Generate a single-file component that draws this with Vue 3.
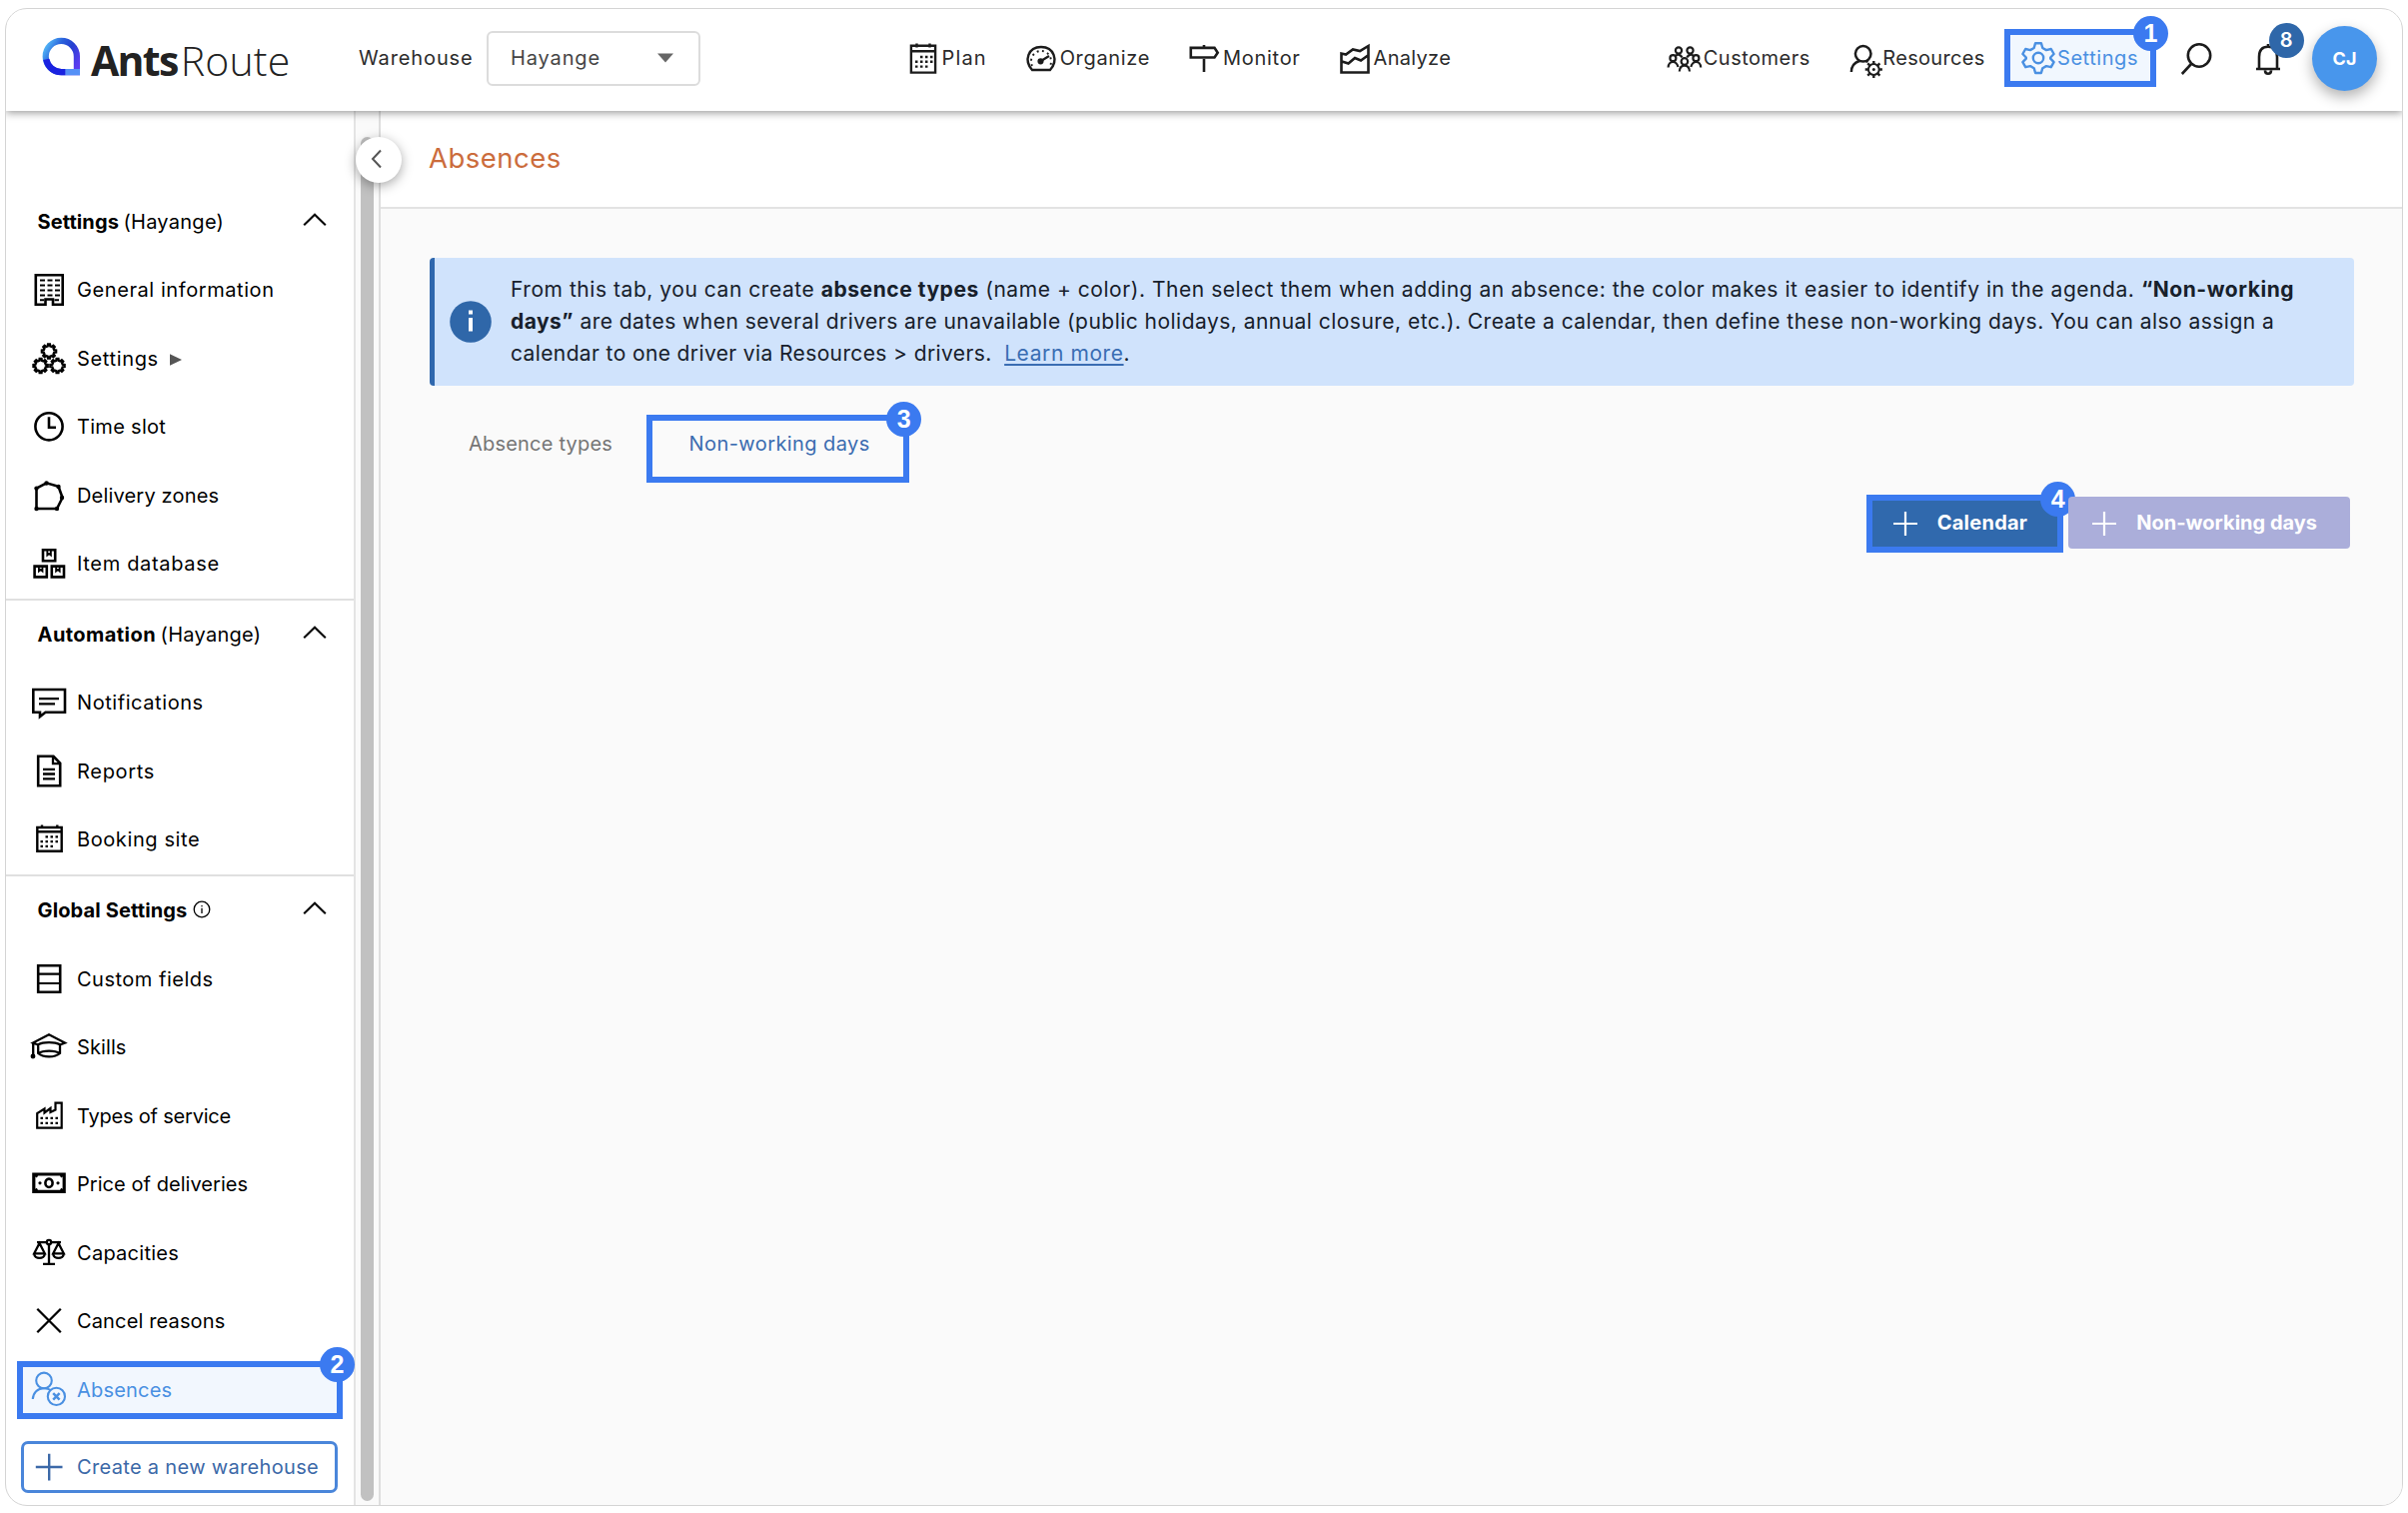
<template>
  <div class="window">
    <header class="topbar">
      <div class="logo">
        <svg class="logo-mark" viewBox="0 0 40 40">
          <defs>
            <linearGradient id="mark" x1="0" y1="0.2" x2="1" y2="0.8">
              <stop offset="0" stop-color="#4fb0f4" />
              <stop offset="0.3" stop-color="#2a62dc" />
              <stop offset="0.6" stop-color="#2440d0" />
              <stop offset="1" stop-color="#5a3cf0" />
            </linearGradient>
          </defs>
          <path d="M35.8 36H20A16 16 0 1 1 35.800 20Z" fill="none" stroke="url(#mark)" stroke-width="6.4" />
          <path d="M4.400 23A16 16 0 0 0 20 36H24" fill="none" stroke="#1a22e0" stroke-width="6.4" />
          <path d="M24 36H39" stroke="#5590f6" stroke-width="6.4" />
        </svg>
        <span class="logo-text"><b>Ants</b><i>Route</i></span>
      </div>

      <span class="wh-label">Warehouse</span>
      <div class="select">
        <span>Hayange</span>
        <svg width="16" height="10" viewBox="0 0 16 10"><path d="M0 .5H16L8 9.5z" fill="#666" /></svg>
      </div>

      <nav class="main-nav">
        <a v-for="n in nav" :key="n.icon" class="nav-item">
          <svg class="nav-icon" viewBox="0 0 30 36" v-html="icons[n.icon]"></svg>
          <span :style="{ letterSpacing: n.ls + 'px' }">{{ n.label }}</span>
        </a>
      </nav>

      <div class="right-nav">
        <a v-for="n in rightNav" :key="n.icon" class="nav-item" :class="{ active: n.step }">
          <svg class="nav-icon wide" viewBox="0 0 34 36" v-html="icons[n.icon]"></svg>
          <span :style="{ letterSpacing: n.ls + 'px' }">{{ n.label }}</span>
          <div v-if="n.step" class="callout"><em>{{ n.step }}</em></div>
        </a>
        <svg class="search" viewBox="0 0 32 36" v-html="icons.search"></svg>
        <div class="bell">
          <svg viewBox="0 0 26 36" v-html="icons.bell"></svg>
          <em class="count">8</em>
        </div>
        <div class="avatar"><span>CJ</span></div>
      </div>
    </header>

    <div class="body">
      <aside class="sidebar">
        <section v-for="s in sections" :key="s.title" class="group">
          <div class="row head">
            <strong :style="{ letterSpacing: s.ls + 'px' }">{{ s.title }}</strong>
            <span v-if="s.site" class="site">({{ s.site }})</span>
            <svg v-else class="info-sm" viewBox="0 0 18 18">
              <circle cx="9" cy="9" r="7.8" /><path d="M9 7.8V13M9 5V6.3" />
            </svg>
            <svg class="chev" viewBox="0 0 24 14"><path d="M1.2 12.2L12 1.8L22.8 12.2" /></svg>
          </div>
          <div v-for="it in s.items" :key="it.label" class="row item" :class="{ active: it.step }">
            <svg class="icon" viewBox="0 0 36 36" v-html="icons[it.icon]"></svg>
            <span :style="{ letterSpacing: it.ls + 'px' }">{{ it.label }}</span>
            <svg v-if="it.sub" class="sub" viewBox="0 0 12 12"><path d="M0 .3L12 6L0 11.7z" /></svg>
            <div v-if="it.step" class="callout"><em>{{ it.step }}</em></div>
          </div>
        </section>
        <button class="create">
          <svg class="icon" viewBox="0 0 36 36" v-html="icons.plus"></svg>
          <span>Create a new warehouse</span>
        </button>
      </aside>

      <div class="gutter">
        <div class="thumb"></div>
        <button class="collapse">
          <svg viewBox="0 0 14 22"><path d="M11 2.500L3 11L11 19.500" /></svg>
        </button>
      </div>

      <main class="main">
        <div class="page-head"><h1>Absences</h1></div>

        <div class="content">
          <div class="banner">
            <div class="info"><svg viewBox="0 0 42 42"><circle cx="21" cy="21" r="20.8" /><path d="M21 17V30.500M21 9.500V13.500" /></svg></div>
            <p>
              <span class="l1">From this tab, you can create <b>absence types</b> (name + color). Then select them when adding an absence: the color makes it easier to identify in the agenda. <b>“Non-working</b></span>
              <span class="l2"><b>days”</b> are dates when several drivers are unavailable (public holidays, annual closure, etc.). Create a calendar, then define these non-working days. You can also assign a</span>
              <span class="l3">calendar to one driver via Resources &gt; drivers. &nbsp;<a>Learn more</a>.</span>
            </p>
          </div>

          <div class="tabs">
            <a class="tab"><span>Absence types</span></a>
            <a class="tab current"><span>Non-working days</span><div class="callout"><em>3</em></div></a>
          </div>

          <div class="actions">
            <button class="btn">
              <svg viewBox="0 0 24 24"><path d="M12 0V24M0 12H24" /></svg>
              <span>Calendar</span>
              <div class="callout"><em>4</em></div>
            </button>
            <button class="btn disabled">
              <svg viewBox="0 0 24 24"><path d="M12 0V24M0 12H24" /></svg>
              <span>Non-working days</span>
            </button>
          </div>
        </div>
      </main>
    </div>
  </div>
</template>

<script setup>
// ls = letter spacing of the label, px
const nav = [
  { label: 'Plan', icon: 'plan', ls: 1.1 },
  { label: 'Organize', icon: 'gauge', ls: 0.67 },
  { label: 'Monitor', icon: 'sign', ls: 0.7 },
  { label: 'Analyze', icon: 'chart', ls: 0.3 }
]

const rightNav = [
  { label: 'Customers', icon: 'people', ls: 0.5 },
  { label: 'Resources', icon: 'resource', ls: 0.3 },
  { label: 'Settings', icon: 'gear', ls: 0.55, step: 1 }
]

const sections = [
  {
    title: 'Settings',
    site: 'Hayange',
    ls: 0.1,
    items: [
      { label: 'General information', icon: 'building', ls: 0.58 },
      { label: 'Settings', icon: 'gears', ls: 0.65, sub: true },
      { label: 'Time slot', icon: 'clock', ls: 0.3 },
      { label: 'Delivery zones', icon: 'zone', ls: 0.18 },
      { label: 'Item database', icon: 'boxes', ls: 0.67 }
    ]
  },
  {
    title: 'Automation',
    site: 'Hayange',
    ls: 0.45,
    items: [
      { label: 'Notifications', icon: 'message', ls: 0.57 },
      { label: 'Reports', icon: 'doc', ls: 0.7 },
      { label: 'Booking site', icon: 'calendar', ls: 0.6 }
    ]
  },
  {
    title: 'Global Settings',
    ls: 0.13,
    items: [
      { label: 'Custom fields', icon: 'fields', ls: 0.5 },
      { label: 'Skills', icon: 'cap', ls: 0.1 },
      { label: 'Types of service', icon: 'factory', ls: -0.2 },
      { label: 'Price of deliveries', icon: 'money', ls: 0.05 },
      { label: 'Capacities', icon: 'scales', ls: 0.27 },
      { label: 'Cancel reasons', icon: 'cross', ls: 0.14 },
      { label: 'Absences', icon: 'absent', ls: 0.2, step: 2 }
    ]
  }
]

// outline of a toothed wheel around (cx, cy)
function wheel(cx, cy, outer, inner, teeth) {
  const pts = []
  const step = (Math.PI * 2) / teeth
  for (let i = 0; i < teeth; i++) {
    const a = i * step - Math.PI / 2
    for (const [off, r] of [[-0.3, inner], [-0.17, outer], [0.17, outer], [0.3, inner]]) {
      pts.push((cx + r * Math.cos(a + off * step)).toFixed(2) + ' ' + (cy + r * Math.sin(a + off * step)).toFixed(2))
    }
  }
  return 'M' + pts.join('L') + 'Z'
}

// short spokes around a ring, drawn for the small wheels
function spokes(cx, cy, from, to, count) {
  let d = ''
  for (let i = 0; i < count; i++) {
    const a = (i * Math.PI * 2) / count
    const c = Math.cos(a)
    const s = Math.sin(a)
    d += `M${(cx + from * c).toFixed(2)} ${(cy + from * s).toFixed(2)}L${(cx + to * c).toFixed(2)} ${(cy + to * s).toFixed(2)}`
  }
  return d
}

const icons = {
  // top bar
  plan: '<path stroke-width="2.4" d="M2.900 5.800H27.100V32.600H2.900ZM2.900 11.200H27.100M8.500 3.600V7.500M21.500 3.600V7.500"/><path stroke-width="2.400" stroke-dasharray="2.500 2.500" d="M12 17H24.500M7 21.800H24.500M7 26.600H19.500"/>',
  gauge: '<path stroke-width="2.400" d="M6 30C-2.500 20.500 2 7 15 7S32.500 20.500 24 30Z"/><path stroke-width="1.900" stroke-dasharray="1.900 3.500" d="M6 26A10 10.500 0 1 1 24 26"/><circle cx="14.500" cy="21.300" r="1.800" fill="currentColor"/><path stroke-width="2.300" d="M14.500 21.300L23 16"/>',
  sign: '<path d="M1.800 7.900H25.500L28.700 12.700L25.500 17.500H1.800ZM15 5V8M15 19V32"/>',
  chart: '<path d="M1.500 32.500V13.500L6 14.500L13 9.500L20 11L28.500 6V32.500ZM2 21.500L8.500 23.500L15 18L21 20.500L28 15.500"/>',
  people: '<g stroke-width="2.200"><circle cx="11" cy="10.500" r="3.100"/><circle cx="22.500" cy="10.500" r="3.100"/><circle cx="5.400" cy="18.200" r="3"/><circle cx="28.400" cy="18.200" r="3"/><circle cx="16.900" cy="21.500" r="3.300"/><path d="M.6 27.500C.8 24 2.500 22 5.400 22C8 22 9.500 23.500 10.500 27M33.200 27.500C33 24 31.300 22 28.400 22C25.800 22 24.300 23.500 23.300 27M11.800 31.500C12 27.500 14 25.600 16.900 25.600S21.800 27.500 22 31.500M8 15.800C10 14 13 14.500 14.500 17.500M25.800 15.800C23.800 14 20.800 14.500 19.300 17.500"/></g>',
  resource: '<circle cx="16.700" cy="13.800" r="7.800" stroke-width="2.500"/><path stroke-width="2.500" d="M4.900 32C5 26 8 22.500 13 21M19.500 21L21.500 22"/><circle cx="27.300" cy="29.500" r="5.400" stroke-width="2"/><path stroke-width="2.400" d="' + spokes(27.3, 29.5, 5.8, 8.6, 8) + '"/><circle cx="27.300" cy="29.500" r="1.500" fill="currentColor" stroke="none"/>',
  gear: '<path stroke-width="2.400" stroke-linejoin="round" d="M14.100 3.200H19.900L21.300 8L25 10.100L29.800 9L32.600 14L29.200 17.500V18.700L32.600 22.200L29.800 27.200L25 26.100L21.300 28.200L19.900 33H14.100L12.700 28.200L9 26.100L4.200 27.200L1.400 22.200L4.800 18.700V17.500L1.400 14L4.200 9L9 10.100L12.700 8Z"/><circle cx="17" cy="18" r="5.200" stroke-width="2.400"/>',
  search: '<circle cx="19" cy="15.500" r="11.200"/><path d="M11 24L1.800 34"/>',
  bell: '<path d="M1 29H25M4 29V17C4 10.500 7 6.800 13 6.800S22 10.500 22 17V29M13 4V7M10 30.500C10 34.800 16 34.800 16 30.500"/>',
  // side bar
  building: '<path d="M4.800 3.200H31.700V32.700H22V27.500H14.500V32.700H4.800Z"/><path stroke-width="2" stroke-dasharray="5 2.500" d="M9 8.500H29M9 13.500H29M9 18.500H29M9 23.500H29"/><path stroke-width="2" d="M9 28.200H13M23.500 28.200H28"/>',
  gears: '<g stroke-width="2.300"><path d="' + wheel(18, 10.5, 7.2, 5.3, 8) + '"/><path d="' + wheel(9.6, 25, 7.2, 5.3, 8) + '"/><path d="' + wheel(26.5, 25, 7.2, 5.3, 8) + '"/></g>',
  clock: '<circle cx="18" cy="17.800" r="13.600"/><path d="M18 8.200V18.800H25"/>',
  zone: '<path d="M5.500 10.600L15.500 5.300L27.500 8.800L31.500 20L26 31H5.500Z"/><g fill="currentColor" stroke="none"><circle cx="5.500" cy="10.600" r="2.200"/><circle cx="15.500" cy="5.500" r="2.200"/><circle cx="27.500" cy="9" r="2.200"/><circle cx="31" cy="20" r="2.200"/><circle cx="26" cy="31" r="2.200"/><circle cx="5.500" cy="31" r="2.200"/></g>',
  boxes: '<path d="M12 4.300H24.200V15.300H12ZM3.600 20.600H15.800V31.400H3.600ZM20.800 20.600H33V31.400H20.800Z"/><path stroke-width="1.800" d="M16.300 5V9.500L18.100 8L19.900 9.500V5M7.900 21V25.500L9.700 24L11.500 25.500V21M25.100 21V25.500L26.900 24L28.700 25.500V21"/>',
  message: '<path d="M2.300 5H34V27.800H14.500L9 32V27.800H2.300Z"/><path stroke-width="2.300" d="M8 14.200H28M8 19.300H24"/>',
  doc: '<path d="M7.200 2.800H22.500L29.200 9.800V32.300H7.200Z"/><path stroke-width="2.300" d="M22 3V10.200H29M12 15.800H24M12 20.500H24M12 25.300H24"/>',
  calendar: '<path stroke-width="2.400" d="M6.300 6H30.700V29.800H6.300ZM6.300 10.300H30.700M11 3.500V7M26.300 3.500V7"/><path stroke-width="2.300" stroke-dasharray="2.500 2.500" d="M14.500 15.300H27.500M9.500 20.100H27.500M9.500 24.900H22.500"/>',
  fields: '<path d="M7.200 4.200H29.200V30.700H7.200Z"/><path stroke-width="2.200" d="M7.200 12.700H29.200M7.200 22H29.200"/>',
  cap: '<g stroke-width="2.300"><path d="M29 15.500L34 13.500L18 5.300L2 13.500L7 15.500M2.200 13.500V26"/><path d="M7.200 15.300C12 12.300 24 12.300 29 15.300V24C24 28.500 12 28.500 7.200 24Z"/><path d="M7.500 24C12 20.800 24 20.800 28.700 24"/><circle cx="2" cy="27" r="1.300" fill="currentColor"/></g>',
  factory: '<path stroke-width="2.200" d="M6.200 29.700V15.200L13.500 10.500V14.500L19.500 10V14L24.500 11.500V4.700H30.700V29.700Z"/><path stroke-width="2.300" stroke-dasharray="2.500 2.500" d="M9.500 19.800H27.500M9.500 24.900H27.500"/>',
  money: '<path stroke-width="3.200" d="M2.800 8H33.200V25.400H2.800Z"/><ellipse cx="18" cy="16.800" rx="3.600" ry="4.200"/><circle cx="9" cy="16.800" r="1.600" fill="currentColor" stroke="none"/><circle cx="27" cy="16.800" r="1.600" fill="currentColor" stroke="none"/><path d="M4 9L6.500 10.500M32 9L29.500 10.500M4 24.400L6.500 23M32 24.400L29.500 23"/>',
  scales: '<g stroke-width="2.300"><circle cx="18" cy="7" r="2.200"/><path d="M6 7.200H15.800M20.200 7.200H30M18 9.200V28.500M12 28.800H24"/><path d="M8.500 8L3.200 18.300H13.800ZM3.200 18.300C3.200 24.500 13.800 24.500 13.800 18.300M27.500 8L22.200 18.300H32.800ZM22.200 18.300C22.200 24.500 32.800 24.500 32.800 18.300"/></g>',
  cross: '<path stroke-width="2.300" d="M6.300 5.800L29.800 29.300M29.800 5.800L6.300 29.300"/>',
  absent: '<g stroke-width="2.100"><circle cx="13" cy="8.400" r="7.800"/><path d="M1.800 27C2.200 20.500 6.500 16.200 13 16.200C16 16.200 18 16.800 19.800 18"/><circle cx="25.400" cy="24.400" r="8.600"/><path stroke-width="2.500" d="M22.200 21.200L28.600 27.600M28.600 21.200L22.200 27.600"/></g>',
  plus: '<path stroke-width="2.400" d="M4.800 18H31.500M18.200 4.700V31.500"/>'
}
</script>

<style>
body { background: #fff; }
button { font: inherit; }
</style>

<style scoped>
.window {
  box-sizing: border-box;
  width: 2400px;
  height: 1499px;
  margin: 8px 0 0 5px;
  border: 1px solid #d4d4d4;
  border-radius: 22px;
  overflow: hidden;
  background: #fff;
  display: flex;
  flex-direction: column;
  font-family: Inter, "Open Sans", sans-serif;
  font-size: 20px;
  letter-spacing: 0.5px;
  color: #000;
}
svg { flex: none; overflow: visible; }
em { font-style: normal; }
span, strong { white-space: nowrap; }

/* numbered frames */
.callout {
  position: absolute;
  border: 6px solid #3b7af0;
}
.callout em {
  position: absolute;
  top: -19.5px;
  right: -18px;
  width: 35px;
  height: 35px;
  border-radius: 50%;
  background: #3b7af0;
  color: #fff;
  font: bold 25px/35px "Liberation Sans", Arial, sans-serif;
  letter-spacing: 0;
  text-align: center;
}

/* top bar */
.topbar {
  position: relative;
  z-index: 3;
  flex: none;
  box-sizing: border-box;
  height: 102px;
  padding: 0 25px 4px 36px;
  display: flex;
  align-items: center;
  background: #fff;
  box-shadow: 0 2px 8px rgba(0, 0, 0, 0.4);
  color: #2b2b2b;
}
.logo { display: flex; align-items: center; width: 317px; }
.logo-mark { width: 39px; height: 39px; margin-top: -4px; }
.logo-text {
  margin: 4px 0 0 10px;
  font: 41px/50px "Open Sans", sans-serif;
  color: #222;
}
.logo-text b { letter-spacing: -1.7px; }
.logo-text i { font-style: normal; font-weight: 300; letter-spacing: 0.2px; margin-left: 3px; }
.wh-label { letter-spacing: 0.88px; }
.select {
  box-sizing: border-box;
  width: 214px;
  height: 55px;
  margin-left: 13.5px;
  padding: 0 25px 0 22px;
  border: 2px solid #dcdcdc;
  border-radius: 6px;
  display: flex;
  align-items: center;
  justify-content: space-between;
  color: #444;
  letter-spacing: 0.85px;
}
.main-nav { display: flex; gap: 39px; margin-left: 207.5px; }
.nav-item { position: relative; display: flex; align-items: center; gap: 4px; isolation: isolate; }
.nav-icon, .search, .bell svg, .icon {
  height: 36px;
  fill: none;
  stroke: currentColor;
  stroke-width: 2.6;
}
.nav-icon { width: 30px; color: #1c1c1c; }
.nav-icon.wide { width: 34px; }
.right-nav { display: flex; align-items: center; margin-left: auto; }
.right-nav .nav-item { gap: 2px; margin-right: 36.5px; }
.right-nav .active { color: #4a90e2; margin-right: 42px; }
.active .nav-icon { color: inherit; }
.right-nav .callout { inset: -11px -18px -11px -17px; background: #f1f7fe; z-index: -1; }
.search { width: 32px; margin-right: 43px; color: #1c1c1c; }
.bell { position: relative; width: 26px; height: 36px; margin-right: 31px; color: #1c1c1c; }
.bell svg { width: 26px; }
.count {
  position: absolute;
  left: 14px;
  top: -17px;
  width: 35px;
  height: 35px;
  border-radius: 50%;
  background: #2f67a9;
  color: #fff;
  font-weight: 600;
  line-height: 35px;
  text-align: center;
}
.avatar {
  width: 65px;
  height: 65px;
  border-radius: 50%;
  background: #4896ec;
  color: #fff;
  font-size: 18px;
  font-weight: 700;
  letter-spacing: 0;
  display: flex;
  align-items: center;
  justify-content: center;
  box-shadow: 0 6px 14px rgba(0, 0, 0, 0.3);
}

/* side bar */
.body { flex: 1; min-height: 0; display: flex; }
.sidebar {
  flex: none;
  box-sizing: border-box;
  width: 350px;
  padding-top: 76.3px;
  border-right: 2px solid #e4e4e4;
}
.group + .group { border-top: 2px solid #e0e0e0; }
.row { position: relative; height: 68.55px; display: flex; align-items: center; isolation: isolate; }
.head { padding: 0 27px 0 31.5px; }
.head .site { margin-left: 4.5px; letter-spacing: 0.27px; }
.chev { width: 24px; height: 14px; margin: -4px 0 0 auto; fill: none; stroke: #000; stroke-width: 2.1; }
.info-sm { width: 18px; height: 18px; margin: -2px 0 0 6px; fill: none; stroke: #000; stroke-width: 1.3; }
.item { padding-left: 25px; }
.icon { width: 36px; margin-right: 10px; }
.sub { width: 12px; height: 12px; margin: 3px 0 0 11px; fill: #555; }
.item.active { color: #4a90e2; }
.item .callout { inset: 5px 11px 5.5px 11px; background: #f2f7fe; z-index: -1; }
.create {
  box-sizing: border-box;
  width: 317px;
  height: 52px;
  margin: 16.5px 0 0 15px;
  padding: 0 0 0 7px;
  border: 3px solid #4a86da;
  border-radius: 7px;
  background: #fff;
  color: #3c69a8;
  display: flex;
  align-items: center;
  letter-spacing: 0.33px;
}

.gutter {
  position: relative;
  z-index: 2;
  flex: none;
  box-sizing: border-box;
  width: 25px;
  padding: 26px 0 4px 5px;
  background: #fafafa;
  border-right: 2px solid #dedede;
}
.thumb { width: 13px; height: 100%; border-radius: 7px; background: #c1c1c1; }
.collapse {
  position: absolute;
  left: 0;
  top: 26px;
  width: 46px;
  height: 46px;
  padding: 0;
  border: 0;
  border-radius: 50%;
  background: #fff;
  box-shadow: 0 3px 12px rgba(0, 0, 0, 0.35);
}
.collapse svg { width: 14px; height: 22px; margin: 2px 4px 0 0; fill: none; stroke: #555; stroke-width: 2; }

/* page */
.main { flex: 1; min-width: 0; background: #fafafa; }
.page-head {
  box-sizing: border-box;
  height: 98px;
  padding: 0 0 2px 48px;
  display: flex;
  align-items: center;
  background: #fff;
  border-bottom: 2px solid #e3e3e3;
}
h1 { margin: 0; font-size: 27.5px; font-weight: 400; letter-spacing: 0.5px; color: #cb6c3c; }
.content { padding: 49px 48px 0 49px; }
.banner {
  box-sizing: border-box;
  height: 128px;
  border-left: 5px solid #2f67ad;
  border-radius: 4px;
  background: #d0e3fc;
  padding-left: 15px;
  display: flex;
  align-items: center;
}
.info svg { display: block; width: 42px; height: 42px; fill: #2f67a9; }
.info path { stroke: #fff; stroke-width: 4; }
.banner p { margin: 0 0 0 19px; font-size: 21px; line-height: 32px; color: #17202b; }
.banner p span { display: block; width: max-content; }
.l1 { letter-spacing: 0.545px; }
.l2 { letter-spacing: 0.47px; }
.l3 { letter-spacing: 0.38px; }
.banner a { color: #3a6db3; letter-spacing: 0.6px; text-decoration: underline; text-underline-offset: 3px; }
.tabs { display: flex; height: 111px; padding-left: 39px; box-sizing: border-box; color: #757575; letter-spacing: 0.2px; }
.tab { position: relative; height: 118px; line-height: 117px; }
.tab.current { margin-left: 76.5px; color: #3b6cb0; letter-spacing: 0.42px; }
.tab .callout { inset: 29px -39.5px auto -42.5px; height: 56px; line-height: normal; }
.actions { display: flex; justify-content: flex-end; gap: 8px; margin-right: 4px; }
.btn {
  position: relative;
  height: 52px;
  box-sizing: border-box;
  padding: 0 33px 0 24px;
  border: 0;
  border-radius: 4px;
  background: #3069ad;
  color: #fff;
  font-weight: 700;
  letter-spacing: 0.25px;
  display: flex;
  align-items: center;
}
.btn svg { width: 24px; height: 24px; margin: 2px 20px 0 0; stroke: #fff; stroke-width: 2.2; }
.btn.disabled { background: #abaeda; letter-spacing: 0; }
.btn .callout { inset: -2px -3px -4px -3px; }
</style>
